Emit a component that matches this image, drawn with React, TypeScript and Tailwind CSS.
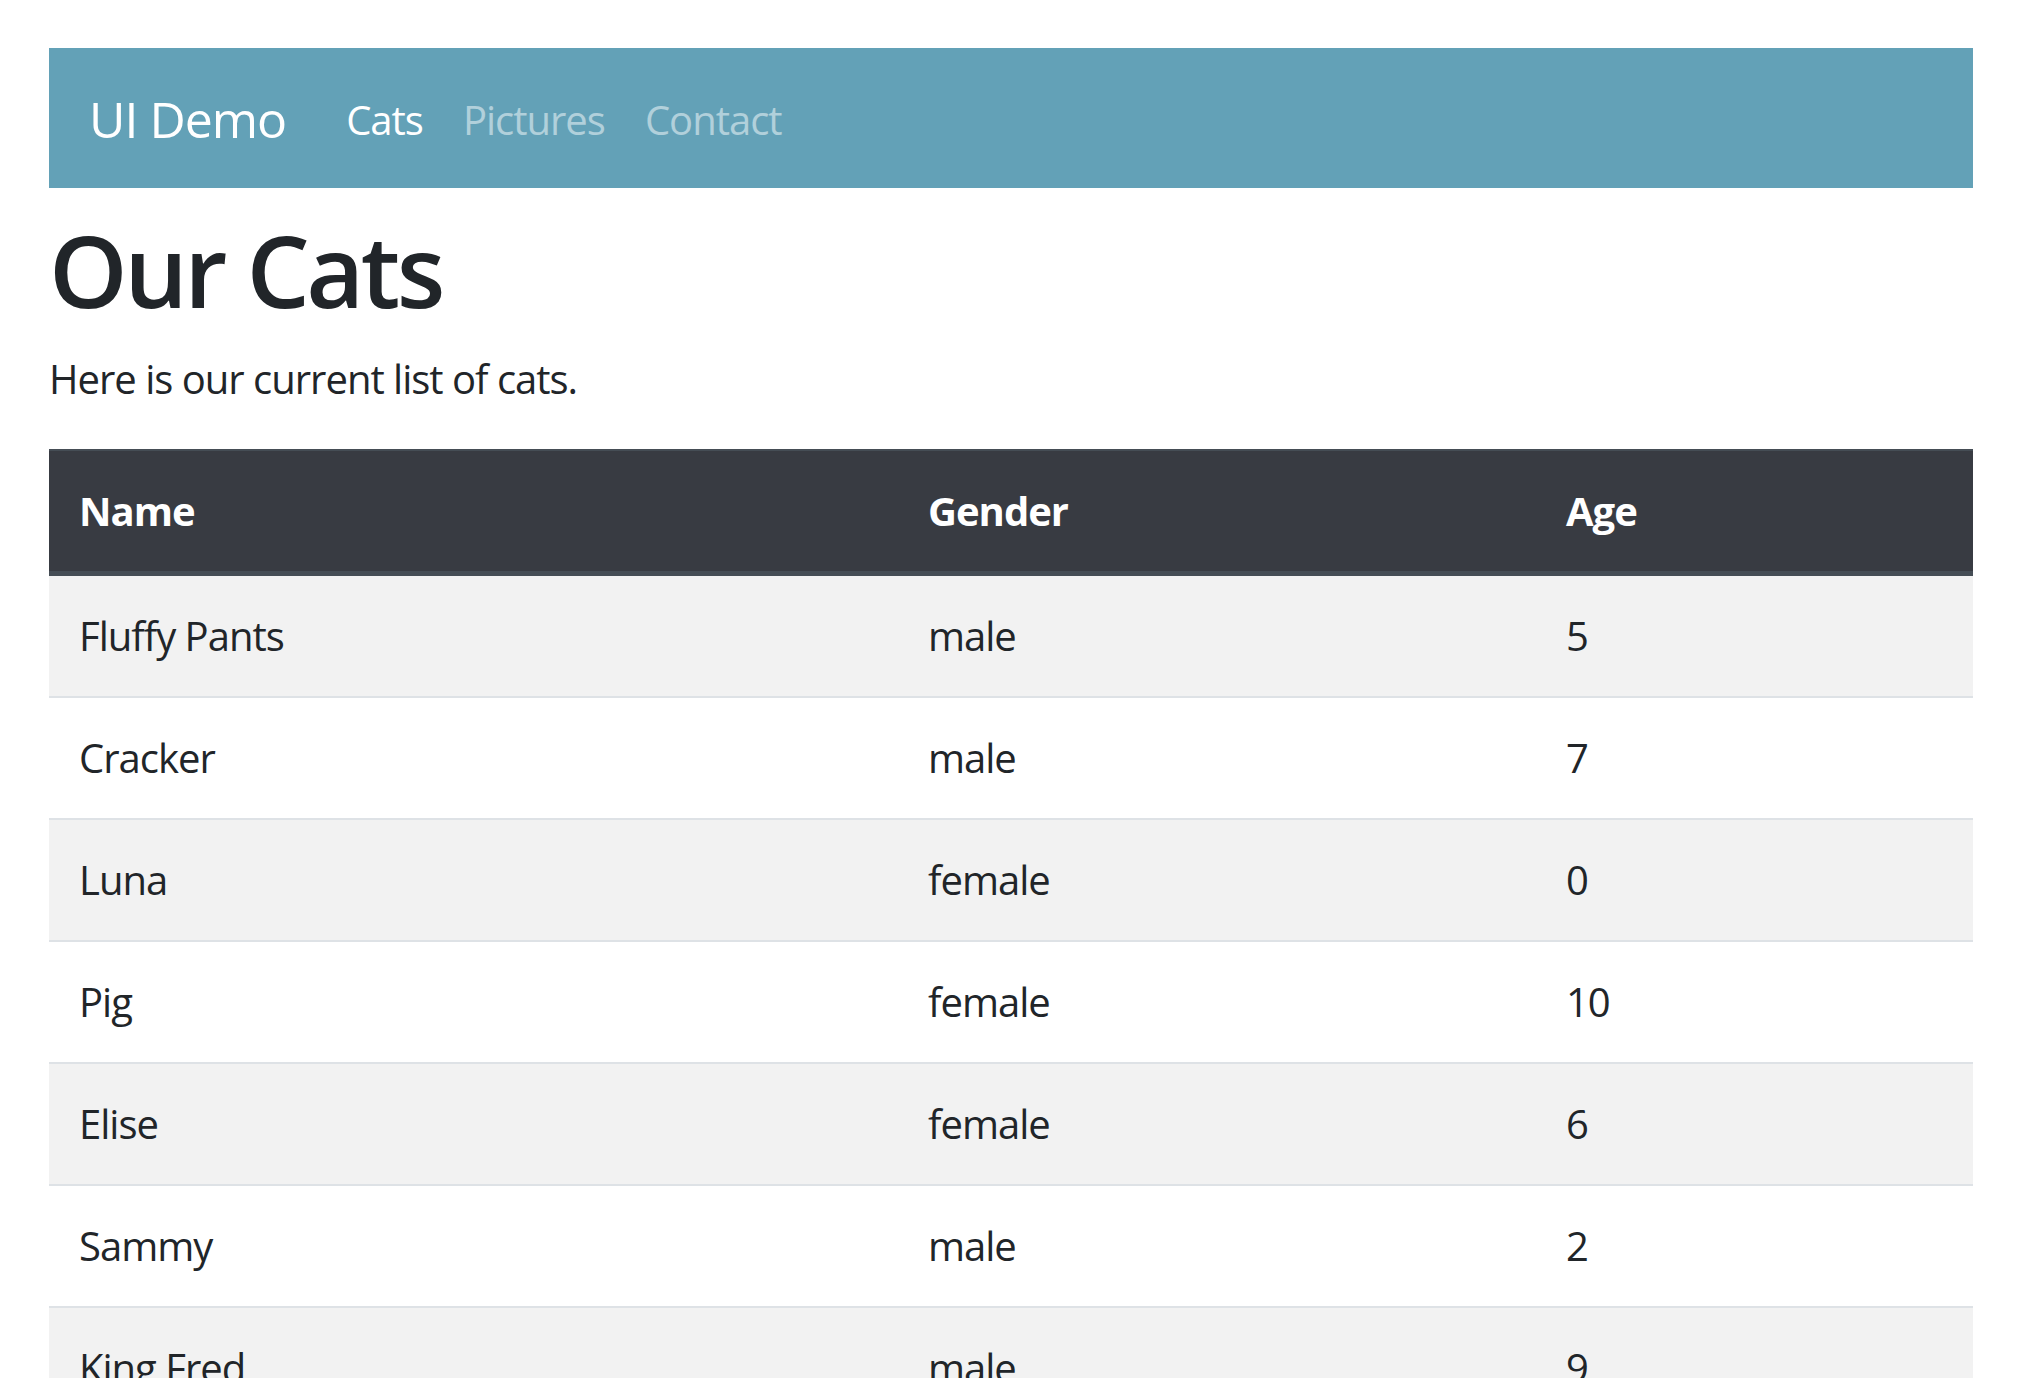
const cats = [
  { name: "Fluffy Pants", gender: "male", age: 5 },
  { name: "Cracker", gender: "male", age: 7 },
  { name: "Luna", gender: "female", age: 0 },
  { name: "Pig", gender: "female", age: 10 },
  { name: "Elise", gender: "female", age: 6 },
  { name: "Sammy", gender: "male", age: 2 },
  { name: "King Fred", gender: "male", age: 9 },
];

export default function App() {
  return (
    <div className="min-h-screen bg-white pl-[49px] pr-[48px] pt-[48px] font-['Open_Sans','Liberation_Sans',sans-serif] text-[40px] leading-[60px] tracking-[-0.025em] text-[#212529]">
      <nav className="flex h-[140px] items-center bg-[#63a1b7] px-[40px] pt-[3px]">
        <a href="#" className="mr-[40px] text-[50px] leading-[75px] text-white">
          UI Demo
        </a>
        <ul className="flex">
          <li>
            <a href="#" className="px-[20px] text-white">
              Cats
            </a>
          </li>
          <li>
            <a href="#" className="px-[20px] text-white/50">
              Pictures
            </a>
          </li>
          <li>
            <a href="#" className="px-[20px] text-white/50">
              Contact
            </a>
          </li>
        </ul>
      </nav>

      <h1 className="mt-[21px] mb-[20px] text-[100px] font-semibold leading-[120px] tracking-[-0.035em]">
        Our Cats
      </h1>
      <p className="mb-[40px]">Here is our current list of cats.</p>

      <table className="w-full">
        <thead>
          <tr className="bg-[#383b42] text-left text-white">
            <th className="w-[849px] border-t-[2px] border-b-[5px] border-[#454d55] p-[30px] font-bold">
              Name
            </th>
            <th className="w-[638px] border-t-[2px] border-b-[5px] border-[#454d55] p-[30px] font-bold">
              Gender
            </th>
            <th className="border-t-[2px] border-b-[5px] border-[#454d55] p-[30px] font-bold">
              Age
            </th>
          </tr>
        </thead>
        <tbody>
          {cats.map((cat, i) => (
            <tr key={cat.name} className={i % 2 === 0 ? "bg-[#f2f2f2]" : "bg-white"}>
              <td className="border-b-[2.5px] border-[#dee2e6] px-[30px] py-[30px]">{cat.name}</td>
              <td className="border-b-[2.5px] border-[#dee2e6] px-[30px] py-[30px]">{cat.gender}</td>
              <td className="border-b-[2.5px] border-[#dee2e6] px-[30px] py-[30px]">{cat.age}</td>
            </tr>
          ))}
        </tbody>
      </table>
    </div>
  );
}
